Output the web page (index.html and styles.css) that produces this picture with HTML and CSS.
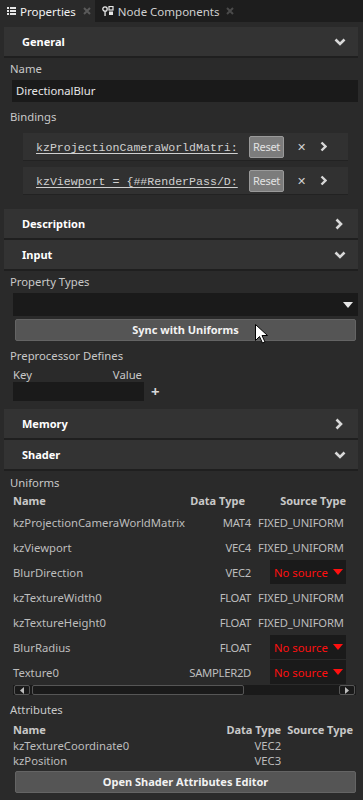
FILE: index.html
```html
<!DOCTYPE html>
<html lang="en">
<head>
  <title>Properties</title>
  <meta charset="UTF-8">
  <meta name="viewport" content="width=device-width, initial-scale=1">
  <link rel="stylesheet" href="styles.css">
</head>
<body>
  <div class="tabs">
    <div class="tab active">
      <svg class="tab-icon" width="9" height="8" viewBox="0 0 9 8"><g fill="#e6e6e6"><rect x="0" y="0" width="2" height="2"/><rect x="3" y="0" width="6" height="2"/><rect x="0" y="3" width="2" height="2"/><rect x="3" y="3" width="6" height="2"/><rect x="0" y="6" width="2" height="2"/><rect x="3" y="6" width="6" height="2"/></g></svg>
      <span>Properties</span>
      <svg class="tab-close" width="8" height="8" viewBox="0 0 8 8"><path d="M1 1L7 7M7 1L1 7" stroke="#5a5a5a" stroke-width="2"/></svg>
    </div>
    <div class="tab">
      <svg class="tab-icon" width="12" height="10" viewBox="0 0 12 10"><circle cx="3" cy="3" r="2.2" fill="none" stroke="#e6e6e6" stroke-width="1.3"/><rect x="2.4" y="5" width="1.3" height="5" fill="#e6e6e6"/><rect x="7" y="0.5" width="4" height="3.5" fill="none" stroke="#e6e6e6" stroke-width="1.2"/><rect x="7" y="5.5" width="4" height="3.5" fill="#e6e6e6"/></svg>
      <span>Node Components</span>
      <svg class="tab-close" width="8" height="8" viewBox="0 0 8 8"><path d="M1 1L7 7M7 1L1 7" stroke="#4a4a4a" stroke-width="2"/></svg>
    </div>
  </div>

  <div class="panel">
    <div class="section-head">
      <span>General</span>
      <svg class="chev" width="12" height="8" viewBox="0 0 12 8"><path d="M1.5 1.5L6 6L10.5 1.5" fill="none" stroke="#d8d8d8" stroke-width="2.6"/></svg>
    </div>
    <div class="section-body general">
      <div class="label">Name</div>
      <div class="field name-field">DirectionalBlur</div>
      <div class="label label-gap">Bindings</div>
      <div class="binding">
        <div class="binding-clip"><span class="binding-text">kzProjectionCameraWorldMatri:</span></div>
        <span class="reset">Reset</span>
        <span class="bx">&#x2715;</span>
        <svg class="bchev" width="7" height="11" viewBox="0 0 7 11"><path d="M1.5 1.5L5.5 5.5L1.5 9.5" fill="none" stroke="#d8d8d8" stroke-width="2.4"/></svg>
      </div>
      <div class="binding">
        <div class="binding-clip"><span class="binding-text">kzViewport = {##RenderPass/D:</span></div>
        <span class="reset">Reset</span>
        <span class="bx">&#x2715;</span>
        <svg class="bchev" width="7" height="11" viewBox="0 0 7 11"><path d="M1.5 1.5L5.5 5.5L1.5 9.5" fill="none" stroke="#d8d8d8" stroke-width="2.4"/></svg>
      </div>
    </div>

    <div class="section-head closed">
      <span>Description</span>
      <svg class="chev" width="8" height="12" viewBox="0 0 8 12"><path d="M1.5 1.5L6 6L1.5 10.5" fill="none" stroke="#d8d8d8" stroke-width="2.6"/></svg>
    </div>
    <div class="section-head">
      <span>Input</span>
      <svg class="chev" width="12" height="8" viewBox="0 0 12 8"><path d="M1.5 1.5L6 6L10.5 1.5" fill="none" stroke="#d8d8d8" stroke-width="2.6"/></svg>
    </div>
    <div class="section-body">
      <div class="label">Property Types</div>
      <div class="field select">
        <svg width="10" height="6" viewBox="0 0 10 6"><path d="M0 0H10L5 6Z" fill="#e6e6e6"/></svg>
      </div>
      <div class="button">Sync with Uniforms</div>
      <div class="label label-gap">Preprocessor Defines</div>
      <div class="kv-head"><span>Key</span><span>Value</span></div>
      <div class="kv-row">
        <div class="field kv-field"></div>
        <span class="plus">+</span>
      </div>
    </div>

    <div class="section-head closed">
      <span>Memory</span>
      <svg class="chev" width="8" height="12" viewBox="0 0 8 12"><path d="M1.5 1.5L6 6L1.5 10.5" fill="none" stroke="#d8d8d8" stroke-width="2.6"/></svg>
    </div>
    <div class="section-head">
      <span>Shader</span>
      <svg class="chev" width="12" height="8" viewBox="0 0 12 8"><path d="M1.5 1.5L6 6L10.5 1.5" fill="none" stroke="#d8d8d8" stroke-width="2.6"/></svg>
    </div>
    <div class="section-body shader">
      <div class="label">Uniforms</div>
      <div class="uniforms">
        <div class="u-head">Name</div><div class="u-head u-type">Data Type</div><div class="u-head u-src">Source Type</div>

        <div class="u-cell">kzProjectionCameraWorldMatrix</div><div class="u-cell u-type">MAT4</div><div class="u-cell fixed">FIXED_UNIFORM</div>
        <div class="u-cell">kzViewport</div><div class="u-cell u-type">VEC4</div><div class="u-cell fixed">FIXED_UNIFORM</div>
        <div class="u-cell">BlurDirection</div><div class="u-cell u-type">VEC2</div><div class="u-cell"><span class="nosrc">No source <svg width="10" height="6" viewBox="0 0 10 6"><path d="M0 0H10L5 6Z" fill="#ff1010"/></svg></span></div>
        <div class="u-cell">kzTextureWidth0</div><div class="u-cell u-type">FLOAT</div><div class="u-cell fixed">FIXED_UNIFORM</div>
        <div class="u-cell">kzTextureHeight0</div><div class="u-cell u-type">FLOAT</div><div class="u-cell fixed">FIXED_UNIFORM</div>
        <div class="u-cell">BlurRadius</div><div class="u-cell u-type">FLOAT</div><div class="u-cell"><span class="nosrc">No source <svg width="10" height="6" viewBox="0 0 10 6"><path d="M0 0H10L5 6Z" fill="#ff1010"/></svg></span></div>
        <div class="u-cell">Texture0</div><div class="u-cell u-type">SAMPLER2D</div><div class="u-cell"><span class="nosrc">No source <svg width="10" height="6" viewBox="0 0 10 6"><path d="M0 0H10L5 6Z" fill="#ff1010"/></svg></span></div>
      </div>
      <div class="hscroll">
        <div class="sbtn"><svg width="4" height="7" viewBox="0 0 4 7"><path d="M4 0V7L0 3.5Z" fill="#bdbdbd"/></svg></div>
        <div class="thumb"></div>
        <div class="sbtn right"><svg width="4" height="7" viewBox="0 0 4 7"><path d="M0 0V7L4 3.5Z" fill="#bdbdbd"/></svg></div>
      </div>

      <div class="label attr-label">Attributes</div>
      <div class="attrs">
        <div class="a-head">Name</div><div class="a-head">Data Type</div><div class="a-head">Source Type</div>
        <div class="a-cell">kzTextureCoordinate0</div><div class="a-cell a-type">VEC2</div><div class="a-cell"></div>
        <div class="a-cell">kzPosition</div><div class="a-cell a-type">VEC3</div><div class="a-cell"></div>
      </div>
      <div class="button">Open Shader Attributes Editor</div>
    </div>
  </div>

  <svg class="cursor" width="13" height="20" viewBox="0 0 13 20"><path d="M0.5 0.5V16.5L4.5 12.5L7.5 19L10 18L7 11.5H12.5Z" fill="#fff" stroke="#000" stroke-width="1"/></svg>
</body>
</html>
```

FILE: styles.css
```css
/* page */
body {
  margin: 0;
  background: #2a2a2a;
  font-family: "Noto Sans", "Open Sans", sans-serif;
  font-size: 11.3px;
  color: #c8c8c8;
  width: 363px;
  height: 800px;
  overflow: hidden;
  position: relative;
}

/* tab strip */
.tabs {
  display: flex;
  height: 22px;
  background: #1d1d1d;
}

.tab {
  display: flex;
  align-items: center;
  padding: 0 6px 0 7px;
  color: #d0d0d0;
  font-size: 11.5px;
}

.tab.active {
  padding-right: 4px;
  background: #2a2a2a;
  color: #f2f2f2;
}

.tab-icon {
  margin-right: 4px;
}

.tab-close {
  margin-left: 7px;
}

/* panel */
.panel {
  padding: 5px 5px 0 4px;
}

.section-head {
  display: flex;
  align-items: center;
  justify-content: space-between;
  height: 29px;
  padding: 0 12px 0 18px;
  background: #333333;
  border-bottom: 2px solid #1f1f1f;
  color: #ffffff;
  font-weight: bold;
  font-size: 11px;
}

.section-head.closed {
  padding-right: 15px;
}

.section-body {
  padding: 3px 0 8px 6px;
}

.section-body.general {
  padding-bottom: 14px;
}

.section-body.shader {
  padding-top: 4px;
}

.label {
  line-height: 16px;
}

.label-gap {
  margin-top: 7px;
}

.field {
  background: #1a1a1a;
  color: #e6e6e6;
}

.name-field {
  margin: 3px 0 0 2px;
  height: 22px;
  line-height: 22px;
  padding-left: 4px;
}

/* bindings */
.binding {
  display: flex;
  align-items: center;
  height: 27px;
  margin: 8px 10px 0 13px;
  padding-left: 13px;
  background: #313131;
  border-bottom: 1px solid #222;
}

.binding + .binding {
  margin-top: 6px;
}

.binding-clip {
  width: 203px;
  overflow: hidden;
}

.binding-text {
  white-space: nowrap;
  font-family: "Liberation Mono", monospace;
  font-size: 11.6px;
  color: #d0d0d0;
  text-decoration: underline;
  text-underline-offset: 2px;
}

.reset {
  margin-left: 10px;
  width: 33px;
  height: 20px;
  line-height: 20px;
  text-align: center;
  background: #7c7c7c;
  border: 1px solid #9a9a9a;
  border-radius: 2px;
  color: #e2e2e2;
  font-size: 11px;
  letter-spacing: -0.3px;
}

.bx {
  margin-left: 13px;
  font-size: 11px;
  color: #d0d0d0;
}

.bchev {
  margin-left: 14px;
}

/* input section */
.select {
  display: flex;
  align-items: center;
  justify-content: flex-end;
  margin: 3px 0 0 3px;
  height: 23px;
  padding-right: 5px;
}

.button {
  margin: 3px 2px 0 5px;
  height: 20px;
  line-height: 20px;
  text-align: center;
  background: #555555;
  border: 1px solid #646464;
  border-radius: 2px;
  color: #f2f2f2;
  font-weight: bold;
  font-size: 11px;
}

.kv-head {
  display: flex;
  justify-content: space-between;
  width: 129px;
  margin: 4px 0 0 3px;
  line-height: 14px;
}

.kv-row {
  display: flex;
  align-items: center;
  margin-left: 3px;
}

.kv-field {
  width: 131px;
  height: 19px;
}

.plus {
  margin-left: 7px;
  font-size: 15px;
  font-weight: bold;
  color: #d8d8d8;
  line-height: 19px;
}

/* uniforms table */
.uniforms {
  display: grid;
  grid-template-columns: minmax(0, 1fr) 70px 88px;
  column-gap: 7px;
  margin: 0 12px 0 3px;
  color: #bdbdbd;
}

.u-head {
  font-weight: bold;
  font-size: 11px;
  height: 19px;
  line-height: 19px;
  color: #c8c8c8;
  white-space: nowrap;
}

.u-cell {
  height: 25px;
  line-height: 25px;
  white-space: nowrap;
}

.u-type {
  text-align: right;
  letter-spacing: -0.3px;
}

.fixed {
  font-size: 11.2px;
  letter-spacing: -0.15px;
}

.u-head.u-type {
  padding-right: 6px;
  letter-spacing: 0;
}

.u-src {
  text-align: right;
}

.nosrc {
  display: flex;
  align-items: center;
  justify-content: space-between;
  margin-left: 12px;
  height: 24px;
  padding: 0 3px 0 4px;
  background: #1a1a1a;
  color: #ff1010;
}

/* scrollbar */
.hscroll {
  display: flex;
  gap: 2px;
  height: 10px;
  margin: 0 2px 0 3px;
  padding: 0 1px;
  background: #1a1a1a;
}

.sbtn {
  display: flex;
  align-items: center;
  justify-content: center;
  width: 16px;
  border: 1px solid #565656;
  border-radius: 2px;
  box-sizing: border-box;
}

.thumb {
  width: 212px;
  border: 1px solid #565656;
  border-radius: 2px;
  box-sizing: border-box;
}

.sbtn.right {
  margin-left: auto;
}

/* attributes */
.attr-label {
  margin-top: 7px;
}

.attrs {
  display: grid;
  grid-template-columns: 1fr auto auto;
  column-gap: 6px;
  margin: 4px 5px 0 3px;
  color: #bdbdbd;
}

.a-head {
  font-weight: bold;
  font-size: 11px;
  line-height: 16px;
  color: #c8c8c8;
}

.a-cell {
  line-height: 15px;
}

.a-type {
  text-align: right;
}

/* mouse pointer over the sync button */
.cursor {
  position: absolute;
  left: 255px;
  top: 324px;
}
```
